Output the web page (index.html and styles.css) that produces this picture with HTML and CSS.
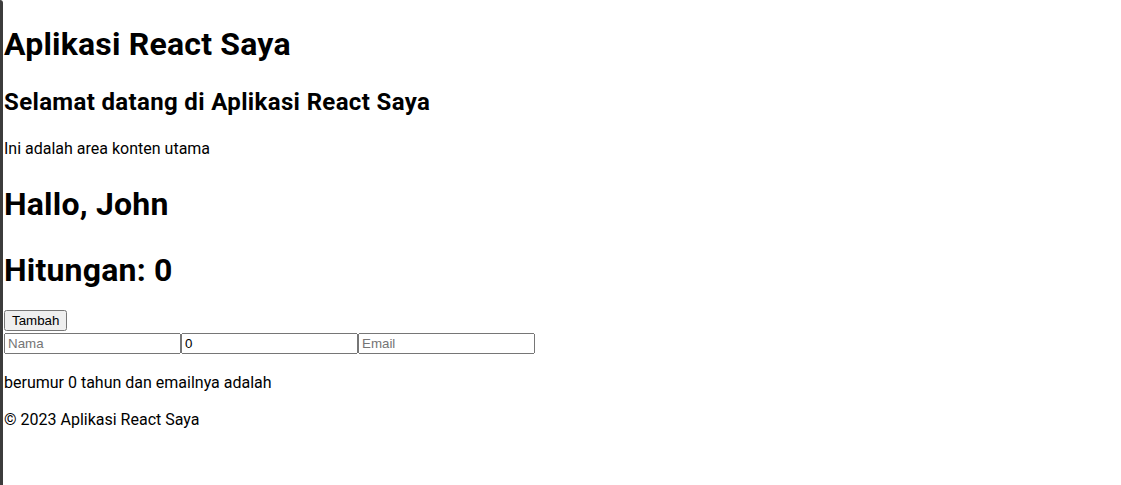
FILE: index.html
```html
<!DOCTYPE html>
<html lang="id">
<head>
<meta charset="utf-8">
<title>Aplikasi React Saya</title>
<link rel="stylesheet" href="styles.css">
</head>
<body>
<div class="frame">
  <div class="edge"></div>
  <div class="app">
    <header class="header">
      <h1 class="title">Aplikasi React Saya</h1>
    </header>
    <main class="main">
      <h2 class="welcome">Selamat datang di Aplikasi React Saya</h2>
      <p class="intro">Ini adalah area konten utama</p>
    </main>
    <h1 class="greet">Hallo, John</h1>
    <h1 class="count">Hitungan: 0</h1>
    <div class="actions"><button class="btn" type="button">Tambah</button></div>
    <form class="fields"><input class="field" type="text" placeholder="Nama"><input class="field" type="number" value="0"><input class="field" type="email" placeholder="Email"></form>
    <p class="summary">berumur 0 tahun dan emailnya adalah </p>
    <footer class="footer"><p class="copy">© 2023 Aplikasi React Saya</p></footer>
  </div>
</div>
</body>
</html>
```
FILE: styles.css
```css
html, body {
  margin: 0;
  padding: 0;
  background: #ffffff;
  height: 100%;
}

body {
  font-family: Roboto, "Liberation Sans", sans-serif;
  color: #000000;
}

.frame {
  display: flex;
  min-height: 100%;
}

.edge {
  width: 3px;
  flex: 0 0 3px;
  background: #3c3c3c;
  border-top-right-radius: 3px;
}

.app {
  flex: 1;
  padding-left: 1px;
  display: flex;
  flex-direction: column;
  align-items: flex-start;
}

.header, .main, .footer {
  display: flex;
  flex-direction: column;
  align-items: flex-start;
}

h1, h2, p {
  margin: 0;
}

.title, .greet, .count {
  font-size: 32px;
  font-weight: 700;
  line-height: 40px;
  letter-spacing: 0.2px;
}

.title { margin-top: 24px; }

.welcome {
  font-size: 24px;
  font-weight: 700;
  line-height: 32px;
  letter-spacing: 0.35px;
  margin-top: 22px;
}

.intro, .summary, .copy {
  font-size: 16px;
  line-height: 19px;
}

.intro { margin-top: 21px; }

.greet { margin-top: 26px; }
.count { margin-top: 26px; }

.actions {
  margin-top: 20px;
  display: flex;
}

.btn {
  font-family: "Liberation Sans", Arial, sans-serif;
  font-size: 13.333px;
  height: 21px;
  padding: 1px 6px;
  margin: 0;
}

.fields {
  display: flex;
  margin: 2px 0 0 0;
}

.field {
  font-family: "Liberation Sans", Arial, sans-serif;
  font-size: 13.333px;
  width: 177px;
  height: 21px;
  box-sizing: border-box;
  margin: 0;
}

.summary { margin-top: 19px; }

.footer { margin-top: 18px; }
```
